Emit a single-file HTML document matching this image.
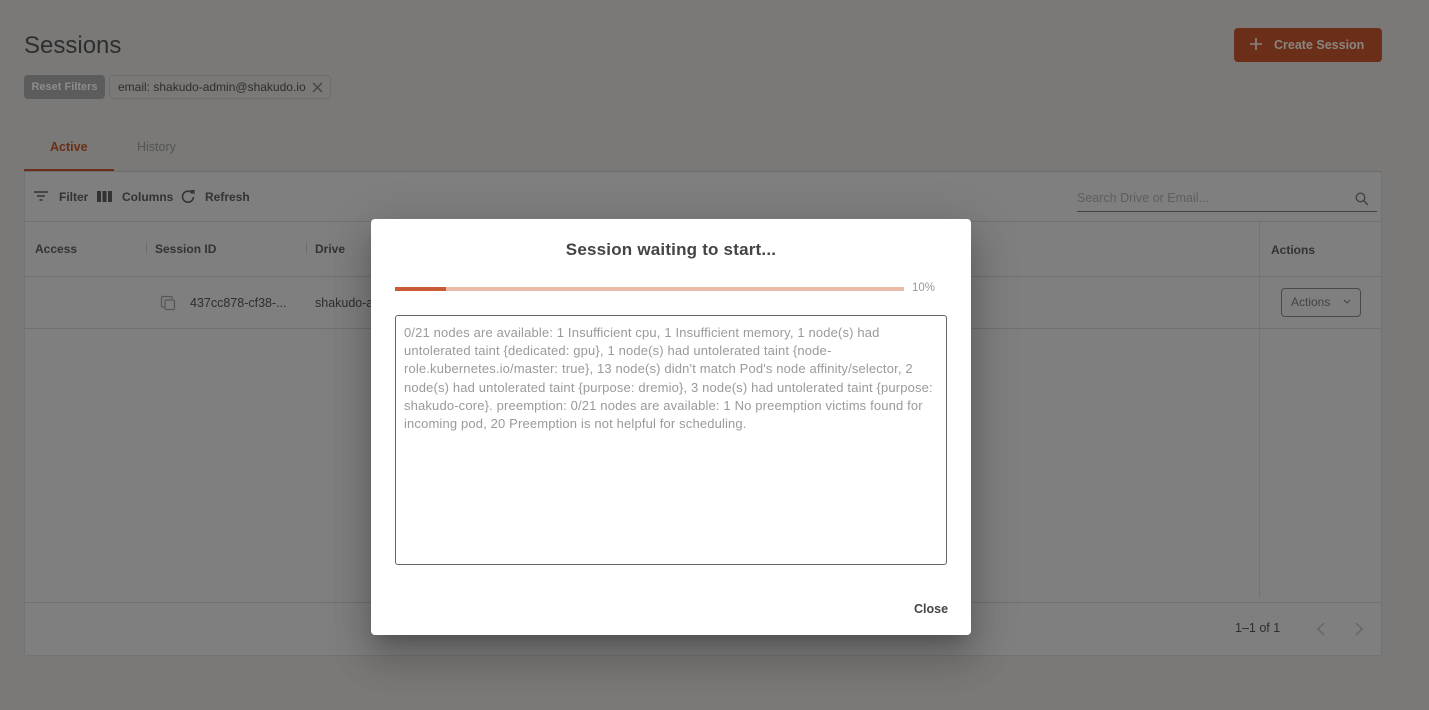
<!DOCTYPE html>
<html><head><meta charset="utf-8"><style>
*{box-sizing:border-box;margin:0;padding:0}
body{width:1429px;height:710px;background:#7a7977;font-family:"Liberation Sans",Roboto,sans-serif;position:relative;overflow:hidden;color:#333}
.a{position:absolute}
.t{font-size:12px;font-weight:bold;color:#333}
</style></head><body>
<div class="a" style="left:24px;top:32px;font-size:24px;color:#2e2e2e">Sessions</div>
<div class="a" style="left:1234px;top:28px;width:148px;height:34px;background:#6b2f19;border-radius:4px;color:#8a8580;font-size:12.5px;font-weight:bold;line-height:34px;padding-left:40px">Create Session</div>
<svg class="a" style="left:1249px;top:37px" width="14" height="14"><path d="M7 1v12M1 7h12" stroke="#8a8580" stroke-width="1.6"/></svg>
<div class="a" style="left:24px;top:75px;width:81px;height:24px;background:#5c5c5c;border-radius:4px;color:#8c8c8c;font-size:11px;font-weight:bold;line-height:24px;text-align:center">Reset Filters</div>
<div class="a" style="left:109px;top:75px;width:222px;height:24px;border:1px solid #6e6e6e;border-radius:4px;color:#2e2e2e;font-size:12px;line-height:22px;padding-left:8px">email: shakudo-admin@shakudo.io</div>
<svg class="a" style="left:312px;top:82px" width="11" height="11"><path d="M1 1l9 9M10 1l-9 9" stroke="#444" stroke-width="1.3"/></svg>
<div class="a" style="left:50px;top:140px;font-size:12.5px;font-weight:bold;color:#6b2f19">Active</div>
<div class="a" style="left:137px;top:140px;font-size:12.5px;color:#555">History</div>
<div class="a" style="left:24px;top:169px;width:90px;height:2px;background:#6b2f19"></div>
<div class="a" style="left:24px;top:171px;width:1358px;height:485px;background:#7f7f7f;border:1px solid #737373;border-radius:3px"></div>
<div class="a" style="left:24px;top:171px;width:1358px;height:1px;background:#6c6c6c"></div>
<svg class="a" style="left:34px;top:190px" width="14" height="12"><path d="M0 2h14M3 6h8M5.5 10h3" stroke="#333" stroke-width="1.5"/></svg>
<div class="a t" style="left:59px;top:190px">Filter</div>
<svg class="a" style="left:97px;top:191px" width="15" height="11"><rect x="0" y="0" width="4" height="11" fill="#333"/><rect x="5.5" y="0" width="4" height="11" fill="#333"/><rect x="11" y="0" width="4" height="11" fill="#333"/></svg>
<div class="a t" style="left:122px;top:190px">Columns</div>
<svg class="a" style="left:181px;top:189px" width="14" height="14"><path d="M11.5 4.5A5.5 5.5 0 1 0 12.5 8" fill="none" stroke="#333" stroke-width="1.6"/><path d="M9 1h4.5v4.5z" fill="#333"/></svg>
<div class="a t" style="left:205px;top:190px">Refresh</div>
<div class="a" style="left:1077px;top:191px;font-size:12.5px;color:#5e5e5e">Search Drive or Email...</div>
<div class="a" style="left:1077px;top:211px;width:300px;height:1px;background:#444"></div>
<svg class="a" style="left:1355px;top:192px" width="14" height="14"><circle cx="5.5" cy="5.5" r="4.3" fill="none" stroke="#444" stroke-width="1.4"/><path d="M8.7 8.7L13 13" stroke="#444" stroke-width="1.5"/></svg>
<div class="a" style="left:25px;top:221px;width:1356px;height:1px;background:#707070"></div>
<div class="a" style="left:25px;top:276px;width:1356px;height:1px;background:#707070"></div>
<div class="a" style="left:25px;top:328px;width:1356px;height:1px;background:#707070"></div>
<div class="a" style="left:25px;top:602px;width:1356px;height:1px;background:#707070"></div>
<div class="a" style="left:1259px;top:222px;width:1px;height:376px;background:#747474"></div>
<div class="a" style="left:146px;top:242px;width:1px;height:12px;background:#6e6e6e"></div>
<div class="a" style="left:306px;top:242px;width:1px;height:12px;background:#6e6e6e"></div>
<div class="a t" style="left:35px;top:242px">Access</div>
<div class="a t" style="left:155px;top:242px">Session ID</div>
<div class="a t" style="left:315px;top:242px">Drive</div>
<div class="a t" style="left:1271px;top:243px">Actions</div>
<svg class="a" style="left:160px;top:295px" width="16" height="16"><path d="M4 12H2.5a1 1 0 0 1-1-1V2.5a1 1 0 0 1 1-1H11a1 1 0 0 1 1 1V4" fill="none" stroke="#555" stroke-width="1.2"/><rect x="5" y="5" width="9.5" height="9.5" rx="1.2" fill="none" stroke="#555" stroke-width="1.2"/></svg>
<div class="a" style="left:190px;top:296px;font-size:12.5px;color:#2e2e2e">437cc878-cf38-...</div>
<div class="a" style="left:315px;top:296px;font-size:12.5px;color:#2e2e2e">shakudo-a</div>
<div class="a" style="left:1281px;top:288px;width:80px;height:29px;border:1px solid #4a4a4a;border-radius:4px;font-size:12px;color:#444;line-height:27px;padding-left:9px">Actions</div>
<svg class="a" style="left:1343px;top:299px" width="8" height="6"><path d="M1 1l3 3 3-3" fill="none" stroke="#444" stroke-width="1"/></svg>
<div class="a" style="left:1235px;top:621px;font-size:12.5px;color:#2e2e2e">1–1 of 1</div>
<svg class="a" style="left:1316px;top:622px" width="10" height="14"><path d="M8 1L2 7l6 6" fill="none" stroke="#666" stroke-width="1.5"/></svg>
<svg class="a" style="left:1354px;top:622px" width="10" height="14"><path d="M2 1l6 6-6 6" fill="none" stroke="#666" stroke-width="1.5"/></svg>

<div class="a" style="left:371px;top:219px;width:600px;height:416px;background:#fff;border-radius:4px;box-shadow:0 11px 15px -7px rgba(0,0,0,.2),0 24px 38px 3px rgba(0,0,0,.14),0 9px 46px 8px rgba(0,0,0,.12)">
<div class="a" style="left:0;top:21px;width:600px;text-align:center;font-size:17px;font-weight:bold;color:#444;letter-spacing:0.2px">Session waiting to start...</div>
<div class="a" style="left:24px;top:68px;width:509px;height:4px;background:#e9bba6"></div>
<div class="a" style="left:24px;top:68px;width:51px;height:4px;background:#c85a35"></div>
<div class="a" style="left:541px;top:63px;font-size:11.5px;color:#999">10%</div>
<div class="a" style="left:24px;top:96px;width:552px;height:250px;border:1px solid #666;border-radius:3px;padding:8px 8px;font-size:13px;letter-spacing:0.15px;line-height:18.2px;color:#9a9a9a">0/21 nodes are available: 1 Insufficient cpu, 1 Insufficient memory, 1 node(s) had untolerated taint {dedicated: gpu}, 1 node(s) had untolerated taint {node-role.kubernetes.io/master: true}, 13 node(s) didn't match Pod's node affinity/selector, 2 node(s) had untolerated taint {purpose: dremio}, 3 node(s) had untolerated taint {purpose: shakudo-core}. preemption: 0/21 nodes are available: 1 No preemption victims found for incoming pod, 20 Preemption is not helpful for scheduling.</div>
<div class="a" style="left:543px;top:383px;font-size:12.5px;font-weight:bold;color:#444">Close</div>
</div>
</body></html>
